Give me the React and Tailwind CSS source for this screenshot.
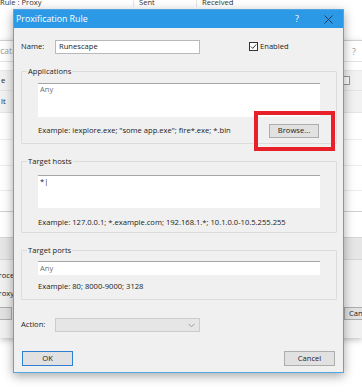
import React from "react";

function GroupBox({ title, className, children }) {
  return (
    <div className={"relative border border-[#dcdcdc] rounded-[1px] " + className}>
      <span className="absolute left-[5px] top-[-6px] bg-[#f0f0f0] px-[1px] leading-[10px]">{title}</span>
      {children}
    </div>
  );
}

export default function App() {
  return (
    <div
      className="relative w-[362px] h-[392px] overflow-hidden bg-white text-[#1b1b1b] text-[7.6px]"
      style={{ fontFamily: '"Open Sans", "Noto Sans", sans-serif' }}
    >
      {/* main window header behind */}
      <div className="absolute left-0 top-0 w-full h-[40px] bg-white">
        <div className="flex h-[10px] items-end text-[#333] leading-[10px] -mt-[3px]">
          <span className="w-[133px]">Rule : Proxy</span>
          <span className="w-[63px] pl-[5px] border-l border-[#e5e5e5]">Sent</span>
          <span className="w-[63px] pl-[5px] border-l border-[#e5e5e5]">Received</span>
          <span className="flex-1 border-l border-[#e5e5e5]"></span>
        </div>
      </div>

      {/* Proxification Rules dialog behind */}
      <div className="absolute left-0 top-[40px] w-full h-[298px] bg-[#f0f0f0] border-t border-[#cfcfcf] shadow-[0_2px_6px_rgba(0,0,0,0.25)] flex flex-col">
        <div className="relative h-[21px] bg-white border-b border-[#e3e3e3]">
          <div className="absolute left-0 top-[5px] w-[13px] h-[11px] overflow-hidden">
            <span className="absolute left-[-25px] top-0 whitespace-nowrap text-[#9a9a9a] text-[8.5px] leading-[10px]">Proxification Rules</span>
          </div>
          <span className="absolute left-[352px] top-[6px] text-[#9a9a9a] text-[9px] leading-[10px]">?</span>
        </div>
        <div className="bg-white h-[150px] flex flex-col text-[#222]">
          <div className="h-[9px] border-b border-[#e8e8e8]"></div>
          <div className="h-[20px] bg-[#f2f2f2] border-b border-[#e5e5e5] flex items-center">
            <span className="ml-[1px]">e</span>
            <span className="ml-auto mr-[12px] w-[7px] h-[9px] border border-[#9a9a9a] bg-white"></span>
          </div>
          <div className="h-[22px] bg-[#f2f2f2] border-b border-[#e5e5e5] flex items-center">
            <span className="ml-[1px]">lt</span>
          </div>
          <div className="h-[27px] border-b border-[#ececec]"></div>
          <div className="h-[26px] border-b border-[#ececec]"></div>
          <div className="h-[25px] border-b border-[#ececec]"></div>
          <div className="flex-1 border-b border-[#d0d0d0]"></div>
        </div>
        <div className="h-[25px] bg-white"></div>
        <div className="h-[23px] bg-[#e6e6e6] border-y border-[#d5d5d5]"></div>
        <div className="flex flex-col pt-[10px] gap-[8px] leading-[10px] text-[#222]">
          <span className="ml-[-6px]">Process</span>
          <span className="ml-[-6px]">Proxy</span>
        </div>
        <div className="mt-[9px] h-[13px] flex justify-between">
          <div className="w-[40px] ml-[-28px] bg-[#e1e1e1] border border-[#adadad]"></div>
          <div className="w-[40px] mr-[-22px] pl-[4px] bg-[#e1e1e1] border border-[#adadad] leading-[11px]">Cancel</div>
        </div>
      </div>

      {/* Proxification Rule dialog */}
      <div className="absolute left-[13px] top-[9px] w-[331px] h-[364px] bg-[#f0f0f0] border border-[#52a6e4] shadow-[0_3px_10px_rgba(0,0,0,0.35)] flex flex-col">
        <div className="h-[18px] bg-[#2b99e6] flex items-center text-white shrink-0">
          <span className="ml-[2px] text-[8.8px] leading-[10px]">Proxification Rule</span>
          <span className="ml-auto mr-[25px] text-[9px] leading-[10px]">?</span>
          <svg width="9" height="9" viewBox="0 0 9 9" className="mr-[10px]">
            <path d="M0.5 0.5 L8.5 8.5 M8.5 0.5 L0.5 8.5" stroke="#1a3a5a" strokeWidth="1" />
          </svg>
        </div>

        <div className="flex flex-col px-[7px]">
          {/* Name row */}
          <div className="flex items-center mt-[12px] h-[14px]">
            <span className="w-[34px]">Name:</span>
            <div className="w-[145px] h-[14px] bg-white border border-[#b9b9b9] flex items-center px-[3px]">Runescape</div>
            <div className="ml-[49px] flex items-center">
              <span className="w-[9px] h-[9px] bg-white border border-[#333] flex items-center justify-center">
                <svg width="7" height="7" viewBox="0 0 7 7">
                  <path d="M1 3.6 L2.8 5.4 L6.2 1.4" stroke="#222" strokeWidth="0.9" fill="none" />
                </svg>
              </span>
              <span className="ml-[2px]">Enabled</span>
            </div>
          </div>

          {/* Applications */}
          <GroupBox title="Applications" className="mt-[17px] h-[73px] w-[316px]">
            <div className="ml-[16px] mt-[11px] w-[282px] h-[34px] bg-white border-t border-[#a5a5a5] px-[2px] text-[#6f6f6f] leading-[11px]">Any</div>
            <div className="flex items-center ml-[16px] mt-[7px]">
              <span>Example: iexplore.exe; "some app.exe"; fire*.exe; *.bin</span>
              <div className="ml-auto mr-[17px] w-[50px] h-[14px] bg-[#e1e1e1] border border-[#adadad] flex items-center justify-center">Browse...</div>
            </div>
          </GroupBox>

          {/* Target hosts */}
          <GroupBox title="Target hosts" className="mt-[17px] h-[72px] w-[316px]">
            <div className="ml-[16px] mt-[13px] w-[282px] h-[33px] bg-white border-t border-[#a5a5a5] px-[2px] leading-[11px]">*|</div>
            <div className="ml-[16px] mt-[9px]">Example: 127.0.0.1; *.example.com; 192.168.1.*; 10.1.0.0-10.5.255.255</div>
          </GroupBox>

          {/* Target ports */}
          <GroupBox title="Target ports" className="mt-[17px] h-[50px] w-[316px]">
            <div className="ml-[16px] mt-[10px] w-[282px] h-[14px] bg-white border-t border-[#a5a5a5] px-[2px] text-[#6f6f6f] leading-[12px]">Any</div>
            <div className="ml-[16px] mt-[6px]">Example: 80; 8000-9000; 3128</div>
          </GroupBox>

          {/* Action */}
          <div className="flex items-center mt-[18px] h-[14px]">
            <span className="w-[34px]">Action:</span>
            <div className="w-[145px] h-[14px] bg-[#e6e6e6] border border-[#cccccc] flex items-center justify-end pr-[4px]">
              <svg width="7" height="5" viewBox="0 0 7 5">
                <path d="M0.5 0.8 L3.5 3.8 L6.5 0.8" stroke="#888" strokeWidth="0.8" fill="none" />
              </svg>
            </div>
          </div>

          {/* Buttons */}
          <div className="flex justify-between mt-[19px] pl-[1px] pr-[1px]">
            <div className="w-[51px] h-[15px] bg-[#e1e1e1] border border-[#2f7fd0] flex items-center justify-center">OK</div>
            <div className="w-[51px] h-[15px] bg-[#e1e1e1] border border-[#adadad] flex items-center justify-center">Cancel</div>
          </div>
        </div>
      </div>

      {/* red highlight annotation */}
      <div className="absolute left-[254px] top-[111px] w-[81px] h-[40px] border-[4px] border-[#e8202a]"></div>
    </div>
  );
}
